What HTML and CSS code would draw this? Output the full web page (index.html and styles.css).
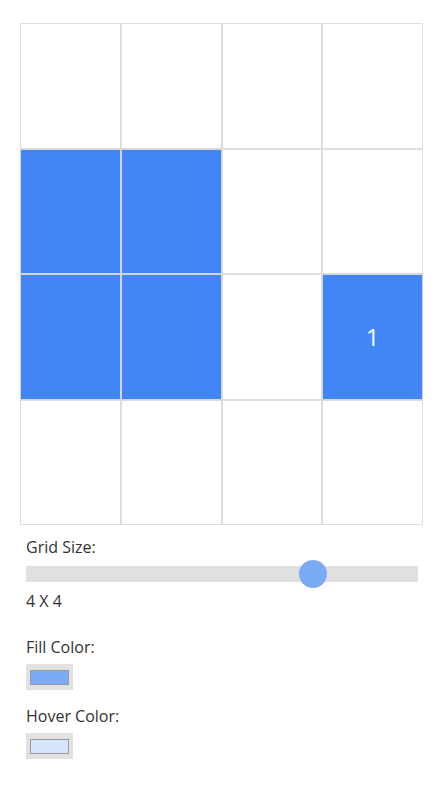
FILE: index.html
```html
<!DOCTYPE html>
<html lang="en">
<head>
<meta charset="utf-8">
<title>Grid</title>
<link rel="stylesheet" href="styles.css">
</head>
<body>
<div class="app">
  <div class="grid">
    <div class="cell"></div>
    <div class="cell"></div>
    <div class="cell"></div>
    <div class="cell"></div>
    <div class="cell filled"></div>
    <div class="cell filled"></div>
    <div class="cell"></div>
    <div class="cell"></div>
    <div class="cell filled"></div>
    <div class="cell filled"></div>
    <div class="cell"></div>
    <div class="cell filled">1</div>
    <div class="cell"></div>
    <div class="cell"></div>
    <div class="cell"></div>
    <div class="cell"></div>
  </div>
  <div class="controls">
    <label class="label first">Grid Size:</label>
    <input class="range" type="range" min="1" max="5" value="4">
    <div class="label value">4 X 4</div>
    <label class="label section">Fill Color:</label>
    <input class="swatch" type="color" value="#7baaf7">
    <label class="label section2">Hover Color:</label>
    <input class="swatch" type="color" value="#d6e4fd">
  </div>
</div>
</body>
</html>
```
FILE: styles.css
```css
html, body {
  margin: 0;
  padding: 0;
  background: #ffffff;
}
body {
  font-family: "Open Sans", "Noto Sans", sans-serif;
  color: #333333;
}
.app {
  padding: 23px 20px 20px 20px;
}
.grid {
  width: 403px;
  height: 502px;
  display: grid;
  grid-template-columns: repeat(4, 1fr);
  grid-template-rows: repeat(4, 1fr);
}
.cell {
  box-sizing: border-box;
  border: 1px solid #dddddd;
  background: #ffffff;
  display: flex;
  align-items: center;
  justify-content: center;
  color: #ffffff;
  font-size: 24px;
}
.cell.filled {
  background: #4285f4;
  border-color: #d4d4d4;
}
.controls {
  display: flex;
  flex-direction: column;
  align-items: flex-start;
  padding-left: 6px;
}
.label {
  display: block;
  font-size: 16px;
  line-height: 22px;
  color: #333333;
}
.first {
  margin-top: 11px;
}
.range {
  -webkit-appearance: none;
  appearance: none;
  width: 392px;
  height: 16px;
  margin: 8px 0 0 0;
  padding: 0;
  background: #e0e0e0;
  outline: none;
  border: none;
}
.range::-webkit-slider-thumb {
  -webkit-appearance: none;
  appearance: none;
  width: 28px;
  height: 28px;
  border-radius: 50%;
  background: #7baaf7;
  border: none;
  cursor: pointer;
}
.value {
  margin-top: 8px;
}
.section {
  margin-top: 24px;
}
.section2 {
  margin-top: 15px;
}
.swatch {
  -webkit-appearance: none;
  appearance: none;
  box-sizing: border-box;
  width: 47px;
  height: 26px;
  margin: 6px 0 0 0;
  padding: 0;
  border: none;
  background: #e1e1e1;
  cursor: pointer;
}
.swatch::-webkit-color-swatch-wrapper {
  padding: 6px 4px 5px 4px;
}
.swatch::-webkit-color-swatch {
  border: 1px solid #9a9a9a;
  border-radius: 0;
}
```
